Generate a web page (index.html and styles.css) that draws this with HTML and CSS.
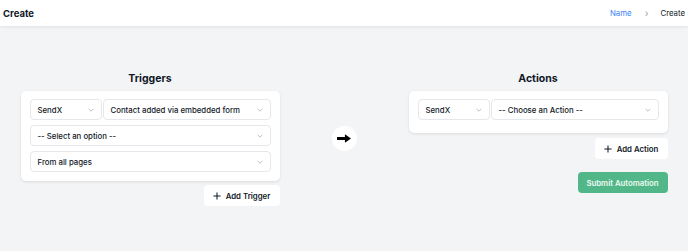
FILE: index.html
```html
<!DOCTYPE html>
<html lang="en">
<head>
  <meta charset="UTF-8">
  <meta name="viewport" content="width=device-width, initial-scale=1.0">
  <title>Create Automation</title>
  <link rel="stylesheet" href="styles.css">
</head>

<body>
  <header class="topbar">
    <h1 class="page-title">Create</h1>
    <nav class="crumbs">
      <a href="#" class="crumb-link">Name</a>
      <span class="crumb-sep">&#8250;</span>
      <span class="crumb-current">Create</span>
    </nav>
  </header>

  <main class="builder">
    <section class="column">
      <h2 class="column-title">Triggers</h2>
      <div class="card">
        <div class="row">
          <div class="select select-app"><span>SendX</span><svg class="chev" viewBox="0 0 10 6"><path d="M1 1l4 4 4-4"/></svg></div>
          <div class="select select-grow"><span>Contact added via embedded form</span><svg class="chev" viewBox="0 0 10 6"><path d="M1 1l4 4 4-4"/></svg></div>
        </div>
        <div class="select"><span>-- Select an option --</span><svg class="chev" viewBox="0 0 10 6"><path d="M1 1l4 4 4-4"/></svg></div>
        <div class="select"><span>From all pages</span><svg class="chev" viewBox="0 0 10 6"><path d="M1 1l4 4 4-4"/></svg></div>
      </div>
      <button class="add-btn add-trigger">
        <svg class="plus" viewBox="0 0 10 10"><path d="M5 0.5v9M0.5 5h9"/></svg>
        Add Trigger
      </button>
    </section>

    <div class="arrow">
      <svg viewBox="0 0 15 9"><path d="M0 3h8.5V0L15 4.5 8.5 9V6H0z"/></svg>
    </div>

    <section class="column">
      <h2 class="column-title">Actions</h2>
      <div class="card card-actions">
        <div class="row">
          <div class="select select-app"><span>SendX</span><svg class="chev" viewBox="0 0 10 6"><path d="M1 1l4 4 4-4"/></svg></div>
          <div class="select select-grow"><span>-- Choose an Action --</span><svg class="chev" viewBox="0 0 10 6"><path d="M1 1l4 4 4-4"/></svg></div>
        </div>
      </div>
      <button class="add-btn add-action">
        <svg class="plus" viewBox="0 0 10 10"><path d="M5 0.5v9M0.5 5h9"/></svg>
        Add Action
      </button>
      <button class="submit">Submit Automation</button>
    </section>
  </main>
</body>

</html>
```

FILE: styles.css
```css
body {
  margin: 0;
  background-color: #f3f4f6;
  font-family: Inter, "Liberation Sans", sans-serif;
  color: #111827;
}

.topbar {
  height: 26px;
  background-color: #fff;
  box-shadow: 0 1px 3px rgba(0, 0, 0, 0.08);
  display: flex;
  align-items: center;
  justify-content: space-between;
  padding: 0 3px;
}

.page-title {
  margin: 0;
  font-size: 9.5px;
  font-weight: 700;
}

.crumbs {
  display: flex;
  align-items: center;
  font-size: 7.8px;
}

.crumb-link {
  color: #3b82f6;
  text-decoration: none;
}

.crumb-sep {
  color: #9ca3af;
  margin: 0 12px 0 13px;
  font-size: 10px;
}

.crumb-current {
  color: #111827;
}

.builder {
  display: flex;
  justify-content: center;
  align-items: flex-start;
  gap: 52px;
  padding-top: 45px;
}

.column {
  width: 259px;
  display: flex;
  flex-direction: column;
}

.column-title {
  margin: 0 0 4px;
  text-align: center;
  font-size: 10.5px;
  line-height: 16px;
  font-weight: 700;
}

.card {
  background-color: #fff;
  border-radius: 5px;
  box-shadow: 0 1px 3px rgba(0, 0, 0, 0.1);
  padding: 8px 9px 9px;
  display: flex;
  flex-direction: column;
  gap: 5px;
}

.card-actions {
  padding-bottom: 13px;
}

.row {
  display: flex;
  gap: 1px;
}

.select {
  height: 21px;
  box-sizing: border-box;
  border: 1px solid #e5e7eb;
  border-radius: 4px;
  display: flex;
  align-items: center;
  justify-content: space-between;
  padding: 0 7px 0 7px;
  font-size: 7.8px;
  font-weight: 500;
  color: #111827;
  white-space: nowrap;
}

.select-app {
  width: 72px;
  flex-shrink: 0;
}

.select-grow {
  flex: 1;
}

.chev {
  width: 6px;
  height: 4px;
  fill: none;
  stroke: #9ca3af;
  stroke-width: 1.2;
}

.add-btn {
  align-self: flex-end;
  height: 21px;
  border: none;
  border-radius: 4px;
  background-color: #fff;
  display: flex;
  align-items: center;
  justify-content: center;
  gap: 5px;
  padding: 0;
  font-family: inherit;
  font-size: 7.8px;
  font-weight: 600;
  color: #111827;
  white-space: nowrap;
}

.add-trigger {
  margin-top: 4px;
  width: 76px;
}

.add-action {
  margin-top: 5px;
  width: 73px;
}

.plus {
  width: 8px;
  height: 8px;
  fill: none;
  stroke: #111827;
  stroke-width: 1.3;
}

.submit {
  align-self: flex-end;
  margin-top: 13px;
  width: 90px;
  height: 21px;
  border: none;
  border-radius: 4px;
  background-color: #52b788;
  color: #eefaf3;
  font-family: inherit;
  font-size: 7.8px;
  font-weight: 600;
  padding: 0;
  white-space: nowrap;
}

.arrow {
  align-self: center;
  width: 25px;
  height: 25px;
  border-radius: 50%;
  background-color: #fff;
  display: flex;
  align-items: center;
  justify-content: center;
}

.arrow svg {
  width: 14px;
  height: 9px;
  fill: #000;
}
```
